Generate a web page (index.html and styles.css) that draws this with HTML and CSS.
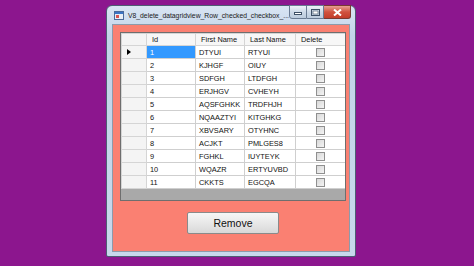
FILE: index.html
```html
<!DOCTYPE html>
<html lang="en">
<head>
    <meta charset="UTF-8">
    <title>V8_delete_datagridview_Row_checked_checkbox</title>
    <link rel="stylesheet" href="styles.css">
</head>
<body>

    <div class="window">
        <div class="titlebar">
            <svg class="app-icon" width="10" height="9" viewBox="0 0 10 9">
                <rect x="0.5" y="0.5" width="9" height="8" fill="#e8eef6" stroke="#4a6a9a"/>
                <rect x="1" y="1" width="8" height="2" fill="#3a74c4"/>
                <rect x="2" y="4" width="3" height="3" fill="#d9534f"/>
            </svg>
            <span class="title">V8_delete_datagridview_Row_checked_checkbox_...</span>
            <div class="caption-buttons">
                <div class="cap-btn">
                    <svg width="8" height="6" viewBox="0 0 8 6"><rect x="0.5" y="3.5" width="7" height="2" fill="#fff" stroke="#3d4f66"/></svg>
                </div>
                <div class="cap-btn">
                    <svg width="9" height="7" viewBox="0 0 9 7"><rect x="0.5" y="0.5" width="8" height="6" fill="none" stroke="#3d4f66"/><rect x="2" y="2" width="5" height="3" fill="#fff" stroke="#3d4f66" stroke-width="0.6"/></svg>
                </div>
                <div class="cap-btn close">
                    <svg width="9" height="7" viewBox="0 0 9 7"><path d="M1 0.5 L8 6.5 M8 0.5 L1 6.5" stroke="#fff" stroke-width="2"/></svg>
                </div>
            </div>
        </div>

        <div class="client">
            <div class="grid">
                <table>
                    <colgroup>
                        <col class="c-head">
                        <col class="c-id">
                        <col class="c-first">
                        <col class="c-last">
                        <col class="c-del">
                    </colgroup>
                    <thead>
                        <tr>
                            <th class="rowhead"></th>
                            <th>Id</th>
                            <th>First Name</th>
                            <th>Last Name</th>
                            <th>Delete</th>
                        </tr>
                    </thead>
                    <tbody id="gridBody">
                        <!-- rows filled by script -->
                    </tbody>
                </table>
            </div>
            <button class="remove-btn" type="button">Remove</button>
        </div>
    </div>

    <script>
        const people = [
            ["DTYUI", "RTYUI"],
            ["KJHGF", "OIUY"],
            ["SDFGH", "LTDFGH"],
            ["ERJHGV", "CVHEYH"],
            ["AQSFGHKK", "TRDFHJH"],
            ["NQAAZTYI", "KITGHKG"],
            ["XBVSARY", "OTYHNC"],
            ["ACJKT", "PMLGES8"],
            ["FGHKL", "IUYTEYK"],
            ["WQAZR", "ERTYUVBD"],
            ["CKKTS", "EGCQA"]
        ];

        const body = document.getElementById("gridBody");
        people.forEach((p, i) => {
            const row = document.createElement("tr");
            row.innerHTML = `
                <td class="rowhead">${i === 0 ? '<span class="arrow"></span>' : ''}</td>
                <td class="${i === 0 ? 'selected' : ''}">${i + 1}</td>
                <td>${p[0]}</td>
                <td>${p[1]}</td>
                <td class="check"><span class="box"></span></td>
            `;
            body.appendChild(row);
        });
    </script>

</body>
</html>
```

FILE: styles.css
```css
body {
    margin: 0;
    height: 266px;
    background-color: #8c168e;
    font-family: "Liberation Sans", Arial, sans-serif;
    padding: 5px 0 0 106px;
    box-sizing: border-box;
}

.window {
    width: 250px;
    height: 252px;
    box-sizing: border-box;
    background: linear-gradient(#d9e5f3, #c3d4e9 30px, #c8d8ec);
    border: 1px solid #4d5d74;
    border-radius: 6px 6px 2px 2px;
    padding: 0 5px 4px 5px;
    display: flex;
    flex-direction: column;
}

.titlebar {
    height: 18px;
    display: flex;
    align-items: center;
    padding-left: 2px;
}

.app-icon {
    flex-shrink: 0;
    margin-right: 4px;
}

.title {
    font-family: "Liberation Sans", Arial, sans-serif;
    font-size: 6.8px;
    color: #1a1a1a;
    white-space: nowrap;
}

.caption-buttons {
    display: flex;
    flex-shrink: 0;
    margin-left: auto;
    align-self: flex-start;
    margin-top: -1px;
    margin-right: -1px;
}

.cap-btn {
    width: 16px;
    height: 12px;
    border: 1px solid #6a7b93;
    border-left: none;
    background: linear-gradient(#eef3f9, #cdd9e8 50%, #bccbdd);
    display: flex;
    align-items: center;
    justify-content: center;
}

.cap-btn:first-child {
    border-left: 1px solid #6a7b93;
    border-radius: 0 0 0 3px;
}

.cap-btn.close {
    width: 26px;
    background: linear-gradient(#e8a093, #d0523f 50%, #c33d2a);
    border-color: #7a3a32;
    border-radius: 0 0 3px 0;
}

.client {
    flex: 1;
    background-color: #fa8072;
    padding: 7px 5px 0 7px;
    border: 1px solid #8d9aab;
}

.grid {
    width: 226px;
    height: 169px;
    box-sizing: border-box;
    background-color: #a9a9a9;
    border: 1px solid #6e6e6e;
    overflow: hidden;
}

table {
    border-collapse: collapse;
    width: 224px;
    table-layout: fixed;
    font-size: 7.4px;
    color: #111;
}

.c-head { width: 25px; }
.c-id { width: 49px; }
.c-first { width: 49px; }
.c-last { width: 51px; }
.c-del { width: 50px; }

th, td {
    height: 12px;
    padding: 0 0 0 3px;
    border: 1px solid #c7c7c7;
    background-color: #fff;
    text-align: left;
    white-space: nowrap;
    overflow: hidden;
}

th {
    font-weight: normal;
    height: 11px;
    padding-left: 5px;
    background-color: #f7f7f7;
    border-color: #d5d5d5;
}

.rowhead {
    background-color: #f4f4f4;
    border-color: #d5d5d5;
    padding: 0;
}

tbody td {
    border-color: #cfcfcf;
}

td.selected {
    background-color: #3399ff;
    color: #fff;
}

.arrow {
    display: block;
    width: 0;
    height: 0;
    margin-left: 5px;
    border-top: 3px solid transparent;
    border-bottom: 3px solid transparent;
    border-left: 4px solid #000;
}

td.check {
    text-align: center;
    padding: 0;
}

.box {
    display: inline-block;
    width: 7px;
    height: 7px;
    vertical-align: middle;
    border: 1px solid #8f8f8f;
    background: linear-gradient(135deg, #d8d8d8, #f4f4f4);
}

.remove-btn {
    display: block;
    width: 92px;
    height: 22px;
    margin: 11px 0 0 67px;
    font-family: "Liberation Sans", Arial, sans-serif;
    font-size: 10.5px;
    color: #111;
    background: linear-gradient(#f6f6f6, #e8e8e8 50%, #d8d8d8);
    border: 1px solid #8a8a8a;
    border-radius: 2px;
}
```
